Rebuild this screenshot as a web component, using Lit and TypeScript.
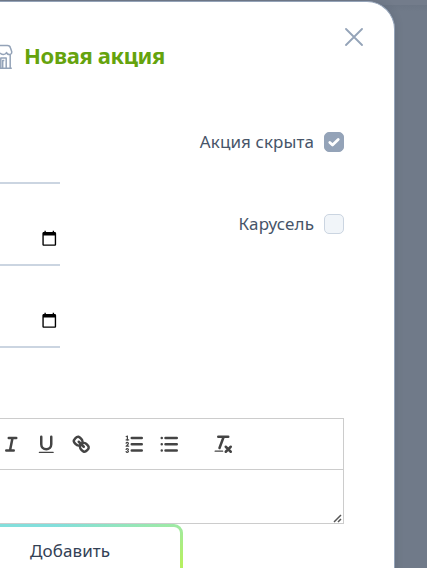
import { LitElement, html, css, svg } from "lit";
import { customElement, property } from "lit/decorators.js";

const icons: Record<string, unknown> = {
  italic: svg`<path d="M7 4h6M5 14h6M8 14l2-10"/>`,
  underline: svg`<path d="M5 3v6a4 4 0 0 0 8 0V3"/><rect class="f" x="3" y="15" width="12" height="1" rx=".5"/>`,
  link: svg`<path d="M7 7l4 4"/><path d="M8.9 4.577a3.476 3.476 0 0 1 .36 4.679A3.476 3.476 0 0 1 4.577 8.9C3.185 7.5 2.035 6.4 4.217 4.217S7.5 3.185 8.9 4.577Z"/><path d="M13.423 9.1a3.476 3.476 0 0 0-4.679-.36 3.476 3.476 0 0 0 .36 4.679c1.392 1.392 2.5 2.542 4.679.36S14.815 10.5 13.423 9.1Z"/>`,
  ordered: svg`<path d="M7 4h8M7 9h8M7 14h8"/><path class="t" d="M2.5 5.5h2"/><path class="f" d="M3.5 6a.5.5 0 0 1-.5-.5V3.085l-.276.138A.5.5 0 0 1 2.053 3c-.124-.247-.023-.324.224-.447l1-.5A.5.5 0 0 1 4 2.5v3a.5.5 0 0 1-.5.5Z"/><path class="t" d="M4.5 10.5h-2c0-.234 1.85-1.076 1.85-2.234A.96.96 0 0 0 2.5 8.156M2.5 14.846a.96.96 0 0 0 1.85-.11A.7.7 0 0 0 3.75 14a.688.688 0 0 0 .6-.736.959.959 0 0 0-1.85-.109"/>`,
  bullet: svg`<path d="M6 4h9M6 9h9M6 14h9M3 4h0M3 9h0M3 14h0"/>`,
  clean: svg`<path d="M5 3h8M6 12l3.35-9M11 11l4 4M15 11l-4 4"/><rect class="f" x="2" y="14" width="7" height="1" rx=".5"/>`,
};

@customElement("tool-button")
class ToolButton extends LitElement {
  @property() icon = "";
  static styles = css`
    :host { display: flex; width: 35px; height: 30px; align-items: center; justify-content: center; flex: none; }
    svg { width: 22.5px; height: 22.5px; fill: none; stroke: #444; stroke-width: 2; stroke-linecap: round; stroke-linejoin: round; }
    .f { fill: #444; stroke: none; }
    .t { stroke-width: 1; }
  `;
  render() {
    return html`<svg viewBox="0 0 18 18">${icons[this.icon]}</svg>`;
  }
}

@customElement("date-field")
class DateField extends LitElement {
  static styles = css`
    :host { display: flex; box-sizing: border-box; width: 60px; height: 50px; border-bottom: 2px solid #cbd5e1; justify-content: flex-end; align-items: center; padding: 0 3px 3px 0; }
    svg { width: 16.5px; height: 16.5px; }
  `;
  render() {
    return html`<svg viewBox="0 0 24 24"><path d="M20 3h-1V1h-2v2H7V1H5v2H4c-1.100 0-2 .9-2 2v16c0 1.100.9 2 2 2h16c1.100 0 2-.9 2-2V5c0-1.100-.9-2-2-2zm0 18H4V8h16v13z"/></svg>`;
  }
}

@customElement("app-root")
class AppRoot extends LitElement {
  static styles = css`
    :host { display: block; width: 427px; height: 568px; overflow: hidden; background: #707a89; font-family: "Noto Sans", sans-serif; color: #475569; }
    * { box-sizing: border-box; }
    .backdrop { height: 568px; overflow: hidden; padding-top: 1px; background: linear-gradient(#737c8b 0 5px, #6c7685 5px, #707a89 12px); }
    .modal { width: 395px; height: 600px; background: #fff; border: solid #94a3b8; border-width: 1px 1px 0 0; border-top-right-radius: 28px; box-shadow: 0 0 8px rgba(40, 55, 75, .18); }
    header { display: flex; height: 107px; padding: 25px 31px 0 0; justify-content: space-between; align-items: flex-start; }
    .title { display: flex; align-items: center; height: 60px; gap: 11px; }
    .shop { width: 13px; height: 26px; fill: none; stroke: #94a3b8; stroke-width: 1.5; stroke-linejoin: round; }
    h1 { margin: 0 0 4px; font-size: 22px; line-height: 30px; font-weight: 700; color: #65a30d; white-space: nowrap; letter-spacing: -.36px; }
    .close { width: 18px; height: 18px; margin-top: 1px; stroke: #94a3b8; stroke-width: 1.8; stroke-linecap: round; }
    .form { display: grid; grid-template-columns: 60px 284px; grid-auto-rows: 82px; }
    .line { height: 75px; border-bottom: 2px solid #cbd5e1; }
    date-field { margin-top: 25px; }
    .check { display: flex; height: 66px; align-items: center; justify-content: flex-end; gap: 10px; font-size: 17px; letter-spacing: .09px; }
    .check span:first-child { padding-bottom: 2px; }
    .box { width: 20px; height: 20px; border-radius: 5px; border: 1px solid #cbd5e1; background: #f1f5f9; display: flex; align-items: center; justify-content: center; }
    .box.on { background: #94a3b8; border-color: #94a3b8; }
    .box svg { width: 14px; height: 14px; fill: none; stroke: #fff; stroke-width: 2.8; stroke-linecap: round; stroke-linejoin: round; }
    .editor { width: 344px; height: 106px; margin-top: 63px; border: 1px solid #ccc; border-left: 0; }
    .tools { display: flex; height: 51px; align-items: center; border-bottom: 1px solid #ccc; }
    .tools :first-child { margin-left: -6px; }
    .gap { margin-left: 18px; }
    .gap.wide { margin-left: 19px; }
    .area { display: flex; height: 53px; justify-content: flex-end; align-items: flex-end; padding-right: 1px; }
    .grip { width: 9px; height: 9px; stroke: #555; stroke-width: 1.5; }
    .add { width: 183px; height: 60px; padding: 3px 3px 3px 0; border-radius: 0 9px 9px 0; background: linear-gradient(165deg, #82dfdc 15%, #9de9a9 42%, #b5f062 80%); }
    .add button { display: block; width: 180px; height: 54px; border: 0; border-radius: 0 6px 6px 0; background: #fff; color: #334155; font: 17px/48px "Noto Sans", sans-serif; letter-spacing: .1px; padding: 0 0 6px 30px; text-align: left; }
  `;
  render() {
    return html`<div class="backdrop"><main class="modal">
      <header>
        <div class="title">
          <svg class="shop" viewBox="0 0 13 26"><path d="M0 1.500h7.500q2.500 0 3 2.500l1.200 3.500q.3 2.800-2.200 3-2.500 0-3-2-1 2-3 2T0 9M10.200 10.500v13M0 24.200h11.800M.8 23.500V14h5.400v9.500M2.700 23.500v-7h1.600"/></svg>
          <h1>Новая акция</h1>
        </div>
        <svg class="close" viewBox="0 0 18 18"><path d="M1 1l16 16M17 1L1 17"/></svg>
      </header>
      <section class="form">
        <div class="line"></div>
        <label class="check"><span>Акция скрыта</span><span class="box on"><svg viewBox="0 0 14 14"><path d="M2.800 7.500l2.700 2.500L11.200 4.500"/></svg></span></label>
        <date-field></date-field>
        <label class="check"><span>Карусель</span><span class="box"></span></label>
        <date-field></date-field>
      </section>
      <section class="editor">
        <div class="tools">
          <tool-button icon="italic"></tool-button><tool-button icon="underline"></tool-button><tool-button icon="link"></tool-button>
          <tool-button class="gap" icon="ordered"></tool-button><tool-button icon="bullet"></tool-button>
          <tool-button class="gap wide" icon="clean"></tool-button>
        </div>
        <div class="area"><svg class="grip" viewBox="0 0 9 9"><path d="M1 8l7-7M5 8l3-3"/></svg></div>
      </section>
      <div class="add"><button>Добавить</button></div>
    </main></div>`;
  }
}
